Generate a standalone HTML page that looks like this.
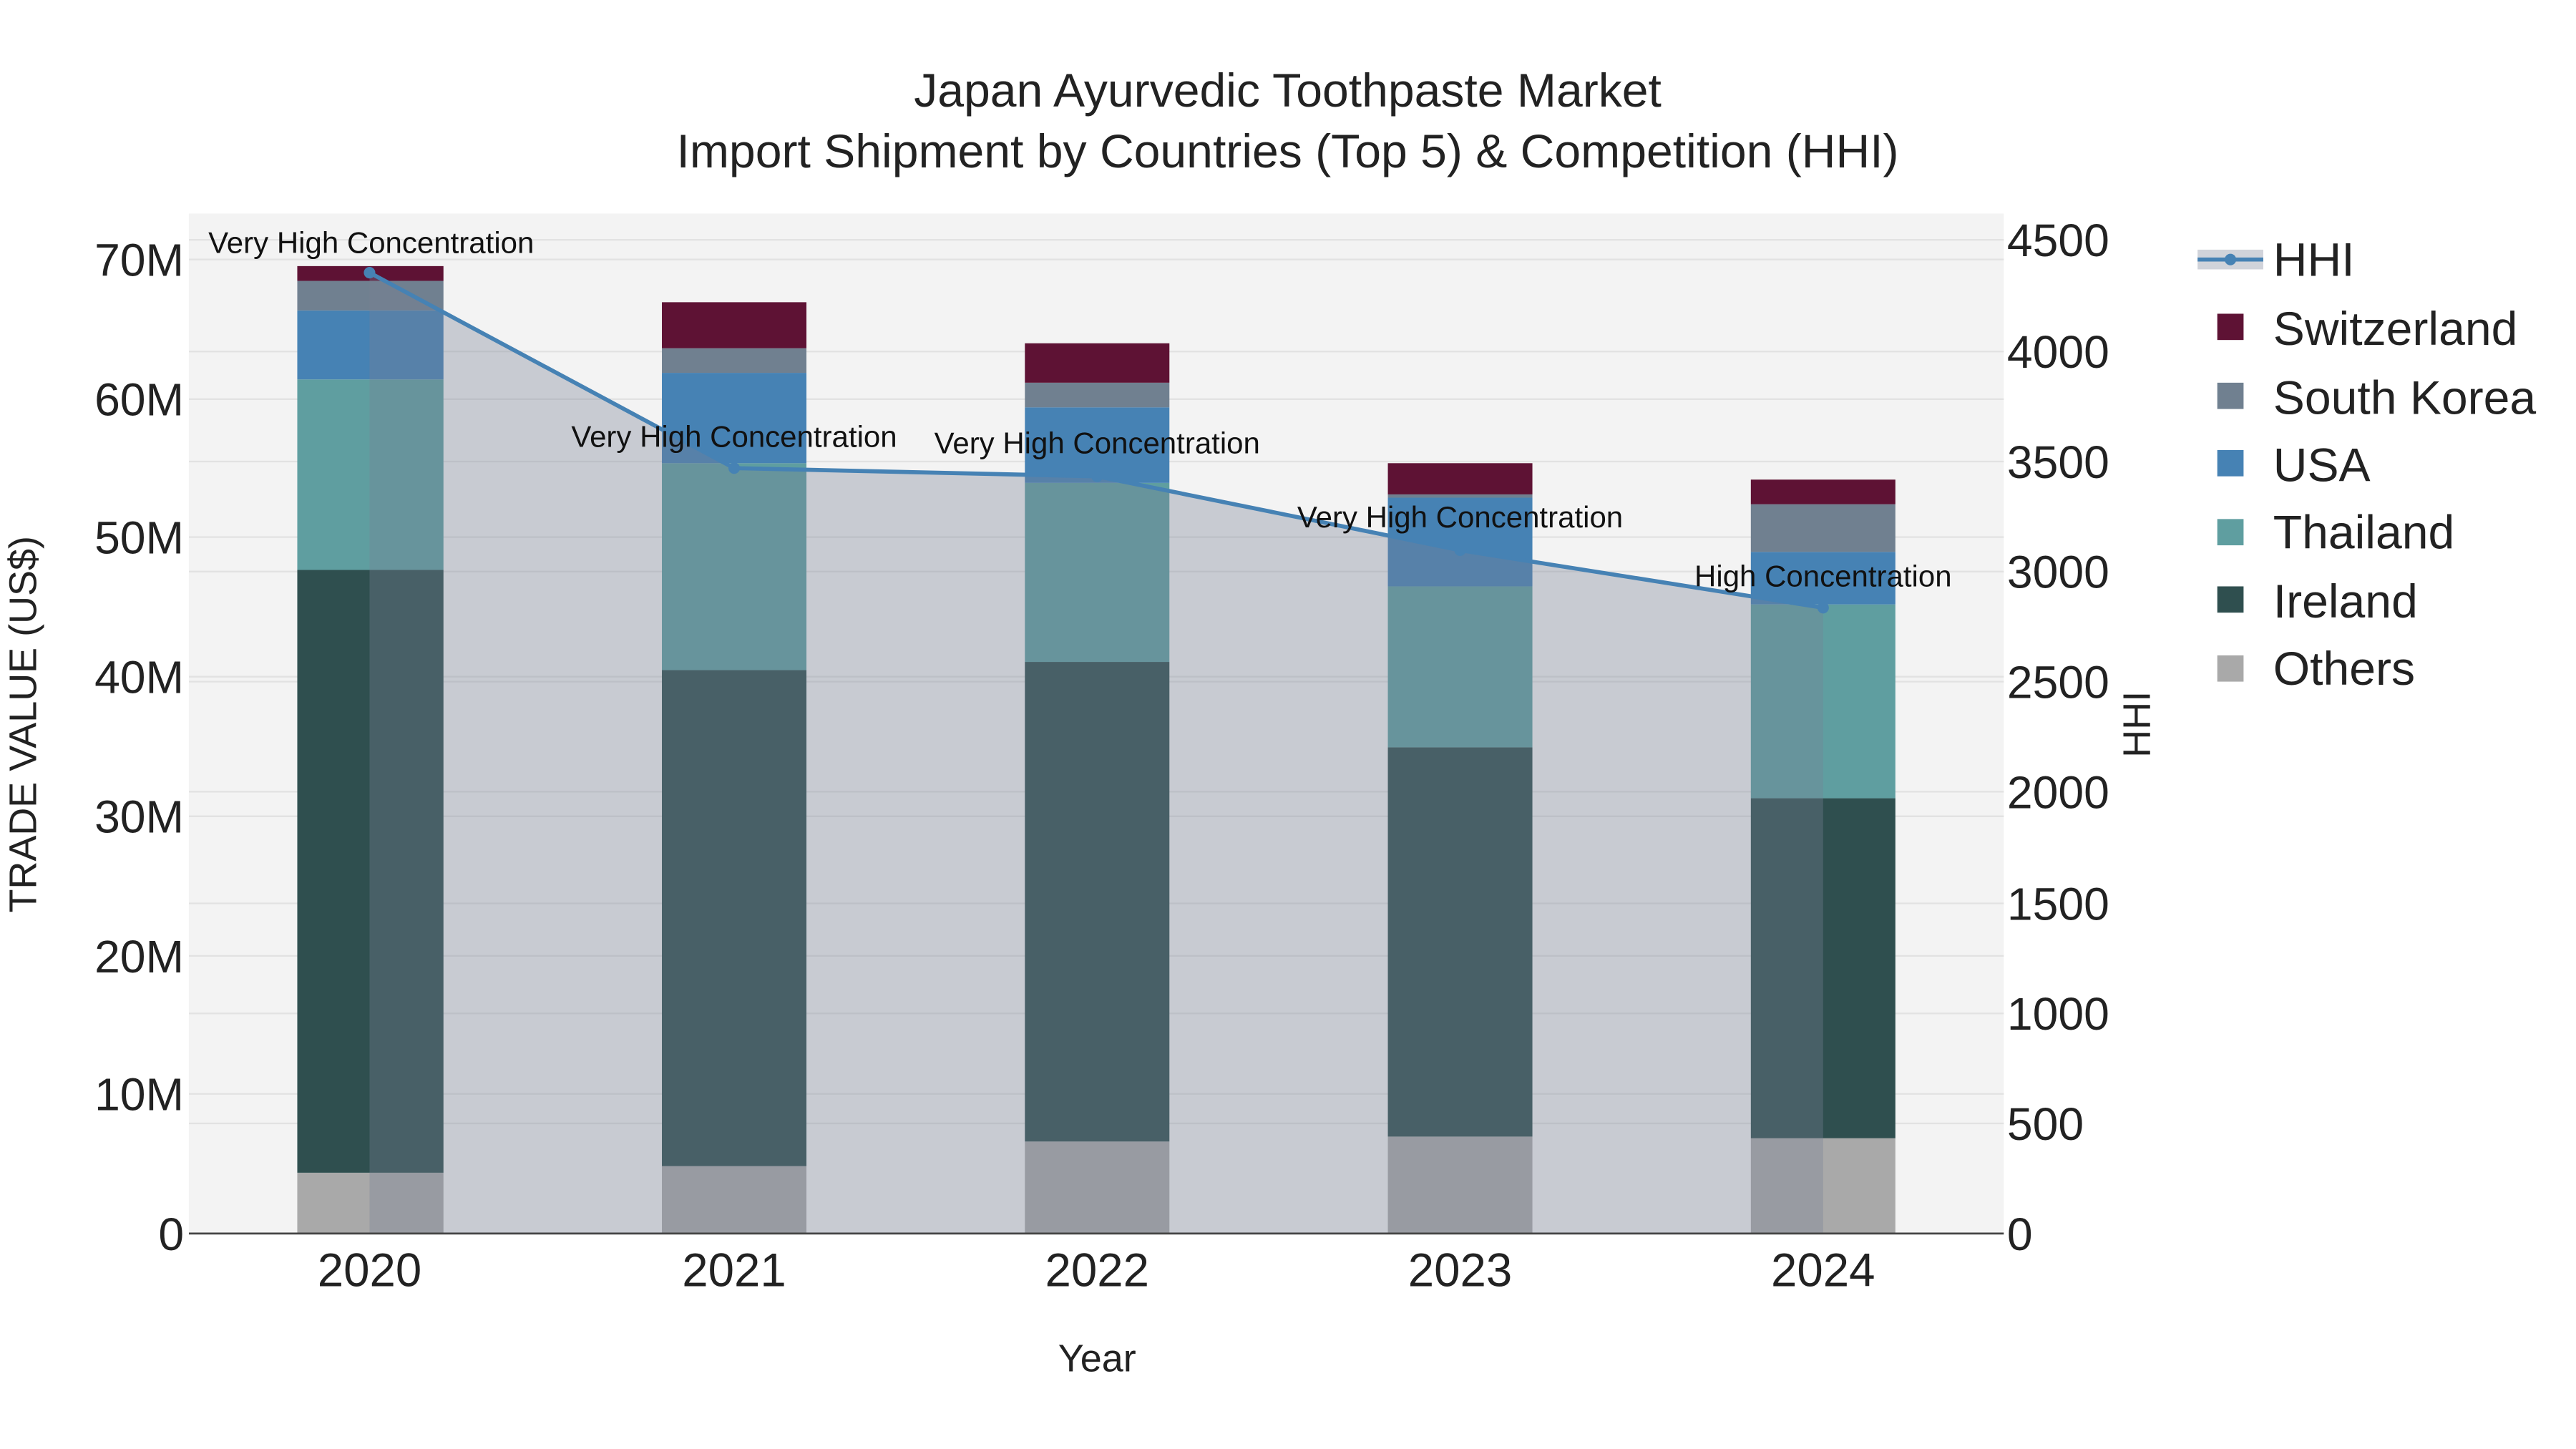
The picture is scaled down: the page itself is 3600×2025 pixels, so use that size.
<!DOCTYPE html>
<html><head><meta charset="utf-8"><style>html,body{margin:0;padding:0;background:#fff}svg{display:block}</style></head><body>
<svg width="3600" height="2025" viewBox="0 0 1568.4 882.2" xmlns="http://www.w3.org/2000/svg" font-family="Liberation Sans, sans-serif">
<rect width="1568.4" height="882.2" fill="#fff"/>
<rect x="115" y="130" width="1105" height="621" fill="#f3f3f3"/>
<g stroke="#e2e2e2" stroke-width="1">
<line x1="115" x2="1220" y1="666" y2="666"/><line x1="115" x2="1220" y1="582" y2="582"/><line x1="115" x2="1220" y1="497" y2="497"/><line x1="115" x2="1220" y1="412" y2="412"/><line x1="115" x2="1220" y1="327" y2="327"/><line x1="115" x2="1220" y1="243" y2="243"/><line x1="115" x2="1220" y1="158" y2="158"/>
<line x1="115" x2="1220" y1="684" y2="684"/><line x1="115" x2="1220" y1="617" y2="617"/><line x1="115" x2="1220" y1="550" y2="550"/><line x1="115" x2="1220" y1="482" y2="482"/><line x1="115" x2="1220" y1="415" y2="415"/><line x1="115" x2="1220" y1="348" y2="348"/><line x1="115" x2="1220" y1="281" y2="281"/><line x1="115" x2="1220" y1="214" y2="214"/><line x1="115" x2="1220" y1="146" y2="146"/>
</g>
<g>
<rect x="181" y="714" width="89" height="37" fill="#a9a9a9"/><rect x="181" y="347" width="89" height="367" fill="#2f4f4f"/><rect x="181" y="231" width="89" height="116" fill="#5f9ea0"/><rect x="181" y="189" width="89" height="42" fill="#4682b4"/><rect x="181" y="171" width="89" height="18" fill="#708090"/><rect x="181" y="162" width="89" height="9" fill="#5e1234"/>
<rect x="403" y="710" width="88" height="41" fill="#a9a9a9"/><rect x="403" y="408" width="88" height="302" fill="#2f4f4f"/><rect x="403" y="282" width="88" height="126" fill="#5f9ea0"/><rect x="403" y="227" width="88" height="55" fill="#4682b4"/><rect x="403" y="212" width="88" height="15" fill="#708090"/><rect x="403" y="184" width="88" height="28" fill="#5e1234"/>
<rect x="624" y="695" width="88" height="56" fill="#a9a9a9"/><rect x="624" y="403" width="88" height="292" fill="#2f4f4f"/><rect x="624" y="294" width="88" height="109" fill="#5f9ea0"/><rect x="624" y="248" width="88" height="46" fill="#4682b4"/><rect x="624" y="233" width="88" height="15" fill="#708090"/><rect x="624" y="209" width="88" height="24" fill="#5e1234"/>
<rect x="845" y="692" width="88" height="59" fill="#a9a9a9"/><rect x="845" y="455" width="88" height="237" fill="#2f4f4f"/><rect x="845" y="357" width="88" height="98" fill="#5f9ea0"/><rect x="845" y="303" width="88" height="54" fill="#4682b4"/><rect x="845" y="301" width="88" height="2" fill="#708090"/><rect x="845" y="282" width="88" height="19" fill="#5e1234"/>
<rect x="1066" y="693" width="88" height="58" fill="#a9a9a9"/><rect x="1066" y="486" width="88" height="207" fill="#2f4f4f"/><rect x="1066" y="368" width="88" height="118" fill="#5f9ea0"/><rect x="1066" y="336" width="88" height="32" fill="#4682b4"/><rect x="1066" y="307" width="88" height="29" fill="#708090"/><rect x="1066" y="292" width="88" height="15" fill="#5e1234"/>
</g>
<polygon points="225,751 225,166 447,285 668,290 889,335 1110,370 1110,751" fill="rgba(120,129,149,0.35)"/>
<polyline points="225,166 447,285 668,290 889,335 1110,370" fill="none" stroke="#4682b4" stroke-width="2.5"/>
<g fill="#4682b4"><circle cx="225" cy="166" r="3.5"/><circle cx="447" cy="285" r="3.5"/><circle cx="668" cy="290" r="3.5"/><circle cx="889" cy="335" r="3.5"/><circle cx="1110" cy="370" r="3.5"/></g>
<line x1="115" x2="1220" y1="751" y2="751" stroke="#444" stroke-width="1.2"/>
<g font-size="18.3" fill="#111" text-anchor="middle">
<text x="226" y="154">Very High Concentration</text>
<text x="447" y="272">Very High Concentration</text>
<text x="668" y="276">Very High Concentration</text>
<text x="889" y="321">Very High Concentration</text>
<text x="1110" y="357">High Concentration</text>
</g>
<g font-size="28.8" fill="#222" text-anchor="middle">
<text x="784" y="65">Japan Ayurvedic Toothpaste Market</text>
<text x="784" y="102">Import Shipment by Countries (Top 5) &amp; Competition (HHI)</text>
</g>
<g font-size="28" fill="#222" text-anchor="end">
<text x="112" y="761">0</text><text x="112" y="676">10M</text><text x="112" y="592">20M</text><text x="112" y="507">30M</text><text x="112" y="422">40M</text><text x="112" y="337">50M</text><text x="112" y="253">60M</text><text x="112" y="168">70M</text>
</g>
<g font-size="28" fill="#222">
<text x="1222" y="761">0</text><text x="1222" y="694">500</text><text x="1222" y="627">1000</text><text x="1222" y="560">1500</text><text x="1222" y="492">2000</text><text x="1222" y="425">2500</text><text x="1222" y="358">3000</text><text x="1222" y="291">3500</text><text x="1222" y="224">4000</text><text x="1222" y="156">4500</text>
</g>
<g font-size="28.5" fill="#222" text-anchor="middle">
<text x="225" y="783">2020</text><text x="447" y="783">2021</text><text x="668" y="783">2022</text><text x="889" y="783">2023</text><text x="1110" y="783">2024</text>
</g>
<text x="668" y="835" font-size="23.5" fill="#222" text-anchor="middle">Year</text>
<text transform="translate(22,441) rotate(-90)" font-size="23.5" fill="#222" text-anchor="middle">TRADE VALUE (US$)</text>
<text transform="translate(1309,441) rotate(-90)" font-size="23.5" fill="#222" text-anchor="middle">HHI</text>
<g>
<rect x="1338" y="152" width="40" height="12" fill="rgba(120,129,149,0.35)"/>
<line x1="1338" x2="1378" y1="158" y2="158" stroke="#4682b4" stroke-width="2.5"/><circle cx="1358" cy="158" r="3.5" fill="#4682b4"/>
<rect x="1350" y="191" width="16" height="16" fill="#5e1234"/>
<rect x="1350" y="233" width="16" height="16" fill="#708090"/>
<rect x="1350" y="274" width="16" height="16" fill="#4682b4"/>
<rect x="1350" y="316" width="16" height="16" fill="#5f9ea0"/>
<rect x="1350" y="357" width="16" height="16" fill="#2f4f4f"/>
<rect x="1350" y="399" width="16" height="16" fill="#a9a9a9"/>
</g>
<g font-size="28.8" fill="#222">
<text x="1384" y="168">HHI</text><text x="1384" y="210">Switzerland</text><text x="1384" y="252">South Korea</text><text x="1384" y="293">USA</text><text x="1384" y="334">Thailand</text><text x="1384" y="376">Ireland</text><text x="1384" y="417">Others</text>
</g>
</svg>
</body></html>
